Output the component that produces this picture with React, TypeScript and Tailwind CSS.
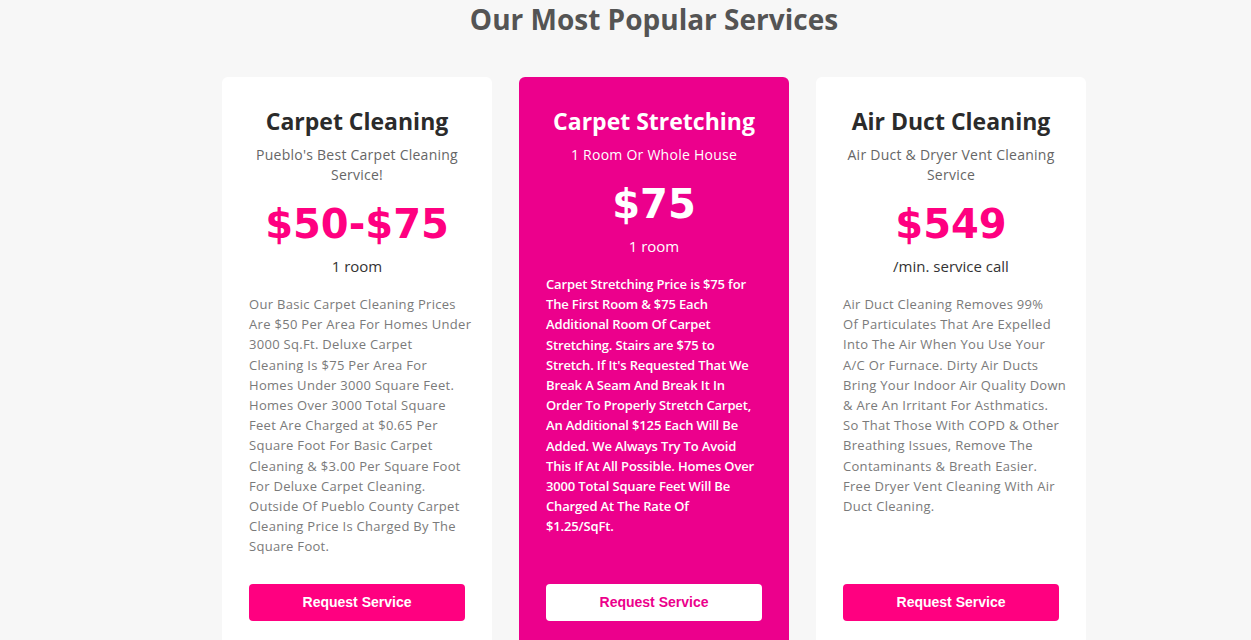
import React from "react";

type Card = {
  title: string;
  subtitle: string[];
  price: string;
  unit: string;
  desc: string[];
  featured?: boolean;
};

const cards: Card[] = [
  {
    title: "Carpet Cleaning",
    subtitle: ["Pueblo's Best Carpet Cleaning", "Service!"],
    price: "$50-$75",
    unit: "1 room",
    desc: [
      "Our Basic Carpet Cleaning Prices",
      "Are $50 Per Area For Homes Under",
      "3000 Sq.Ft. Deluxe Carpet",
      "Cleaning Is $75 Per Area For",
      "Homes Under 3000 Square Feet.",
      "Homes Over 3000 Total Square",
      "Feet Are Charged at $0.65 Per",
      "Square Foot For Basic Carpet",
      "Cleaning & $3.00 Per Square Foot",
      "For Deluxe Carpet Cleaning.",
      "Outside Of Pueblo County Carpet",
      "Cleaning Price Is Charged By The",
      "Square Foot.",
    ],
  },
  {
    title: "Carpet Stretching",
    subtitle: ["1 Room Or Whole House"],
    price: "$75",
    unit: "1 room",
    featured: true,
    desc: [
      "Carpet Stretching Price is $75 for",
      "The First Room & $75 Each",
      "Additional Room Of Carpet",
      "Stretching. Stairs are $75 to",
      "Stretch. If It's Requested That We",
      "Break A Seam And Break It In",
      "Order To Properly Stretch Carpet,",
      "An Additional $125 Each Will Be",
      "Added. We Always Try To Avoid",
      "This If At All Possible. Homes Over",
      "3000 Total Square Feet Will Be",
      "Charged At The Rate Of",
      "$1.25/SqFt.",
    ],
  },
  {
    title: "Air Duct Cleaning",
    subtitle: ["Air Duct & Dryer Vent Cleaning", "Service"],
    price: "$549",
    unit: "/min. service call",
    desc: [
      "Air Duct Cleaning Removes 99%",
      "Of Particulates That Are Expelled",
      "Into The Air When You Use Your",
      "A/C Or Furnace. Dirty Air Ducts",
      "Bring Your Indoor Air Quality Down",
      "& Are An Irritant For Asthmatics.",
      "So That Those With COPD & Other",
      "Breathing Issues, Remove The",
      "Contaminants & Breath Easier.",
      "Free Dryer Vent Cleaning With Air",
      "Duct Cleaning.",
    ],
  },
];

function PriceCard({ c }: { c: Card }) {
  const f = !!c.featured;
  return (
    <div
      className={`w-[270px] rounded-[6px] flex flex-col px-[27px] pt-[30px] pb-[27px] ${
        f ? "bg-[#ec008c]" : "bg-white"
      }`}
    >
      <h3
        className={`text-center text-[23px] leading-[28px] font-bold ${
          f ? "text-white" : "text-[#2b2b2b]"
        }`}
      >
        {c.title}
      </h3>
      <div
        className={`mt-[10px] text-center text-[14px] leading-[20px] tracking-[0.25px] ${
          f ? "text-white" : "text-[#666666]"
        }`}
      >
        {c.subtitle.map((s, i) => (
          <div key={i}>{s}</div>
        ))}
      </div>
      <div
        className={`mt-[10px] text-center text-[40px] leading-[58px] font-bold font-['DejaVu_Sans',sans-serif] ${
          f ? "text-white" : "text-[#ff0080]"
        }`}
      >
        {c.price}
      </div>
      <div
        className={`mt-[3px] text-center text-[15px] leading-[20px] ${
          f ? "text-white" : "text-[#333333]"
        }`}
      >
        {c.unit}
      </div>
      <div
        className={`mt-[18px] mb-[27px] text-[13px] leading-[20.2px] whitespace-nowrap ${
          f ? "text-white font-semibold tracking-[-0.15px]" : "text-[#7a7a7a] tracking-[0.3px]"
        }`}
      >
        {c.desc.map((d, i) => (
          <div key={i}>{d}</div>
        ))}
      </div>
      <button
        className={`mt-auto h-[37px] w-full shrink-0 rounded-[4px] text-[14px] font-bold font-['Liberation_Sans',Arial,sans-serif] ${
          f ? "bg-white text-[#ec008c]" : "bg-[#ff0080] text-white"
        }`}
      >
        Request Service
      </button>
    </div>
  );
}

export default function App() {
  return (
    <div className="h-[640px] overflow-hidden bg-[#f7f7f7] font-['Open_Sans',sans-serif] pl-[57px]">
      <h2 className="text-center text-[28px] leading-[38px] font-bold text-[#545454]">
        Our Most Popular Services
      </h2>
      <div className="mt-[39px] flex justify-center gap-[27px] items-stretch">
        {cards.map((c, i) => (
          <PriceCard key={i} c={c} />
        ))}
      </div>
    </div>
  );
}
